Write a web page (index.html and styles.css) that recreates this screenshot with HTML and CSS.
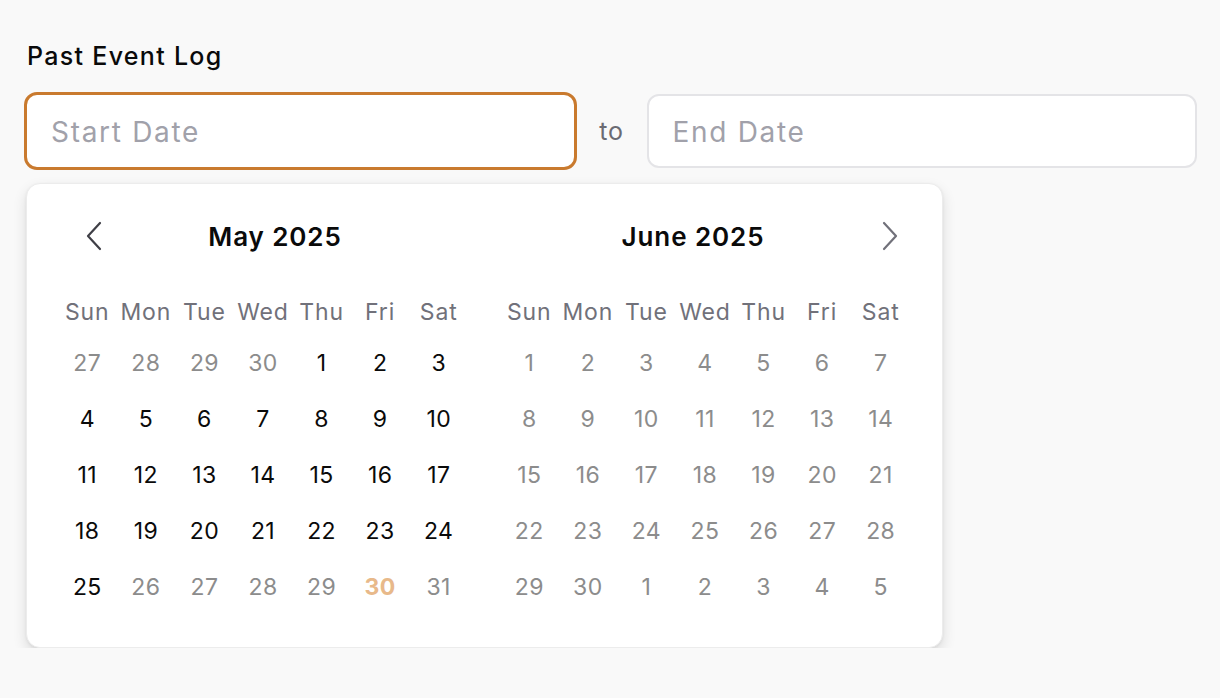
FILE: index.html
```html
<!DOCTYPE html>
<html lang="en">
<head>
<meta charset="utf-8">
<title>Past Event Log</title>
<link rel="stylesheet" href="styles.css">
</head>
<body>
<div class="page">
  <div class="label">Past Event Log</div>
  <div class="range">
    <div class="field field-active"><span class="ph">Start Date</span></div>
    <span class="to">to</span>
    <div class="field"><span class="ph">End Date</span></div>
  </div>
  <div class="popover">
    <div class="month">
      <div class="mhead">
        <button class="nav nav-prev" aria-label="Previous month">
          <svg width="18" height="30" viewBox="0 0 18 30"><path d="M15 2 L3 15 L15 28" fill="none" stroke="#3f3f46" stroke-width="2.2" stroke-linecap="round" stroke-linejoin="round"/></svg>
        </button>
        <div class="mtitle">May 2025</div>
      </div>
      <div class="grid">
        <span class="wd">Sun</span><span class="wd">Mon</span><span class="wd">Tue</span><span class="wd">Wed</span><span class="wd">Thu</span><span class="wd">Fri</span><span class="wd">Sat</span>
        <span class="d out">27</span><span class="d out">28</span><span class="d out">29</span><span class="d out">30</span><span class="d">1</span><span class="d">2</span><span class="d">3</span>
        <span class="d">4</span><span class="d">5</span><span class="d">6</span><span class="d">7</span><span class="d">8</span><span class="d">9</span><span class="d">10</span>
        <span class="d">11</span><span class="d">12</span><span class="d">13</span><span class="d">14</span><span class="d">15</span><span class="d">16</span><span class="d">17</span>
        <span class="d">18</span><span class="d">19</span><span class="d">20</span><span class="d">21</span><span class="d">22</span><span class="d">23</span><span class="d">24</span>
        <span class="d">25</span><span class="d out">26</span><span class="d out">27</span><span class="d out">28</span><span class="d out">29</span><span class="d today">30</span><span class="d out">31</span>
      </div>
    </div>
    <div class="month">
      <div class="mhead">
        <div class="mtitle">June 2025</div>
        <button class="nav nav-next" aria-label="Next month">
          <svg width="18" height="30" viewBox="0 0 18 30"><path d="M3 2 L15 15 L3 28" fill="none" stroke="#71717a" stroke-width="2.2" stroke-linecap="round" stroke-linejoin="round"/></svg>
        </button>
      </div>
      <div class="grid">
        <span class="wd">Sun</span><span class="wd">Mon</span><span class="wd">Tue</span><span class="wd">Wed</span><span class="wd">Thu</span><span class="wd">Fri</span><span class="wd">Sat</span>
        <span class="d out">1</span><span class="d out">2</span><span class="d out">3</span><span class="d out">4</span><span class="d out">5</span><span class="d out">6</span><span class="d out">7</span>
        <span class="d out">8</span><span class="d out">9</span><span class="d out">10</span><span class="d out">11</span><span class="d out">12</span><span class="d out">13</span><span class="d out">14</span>
        <span class="d out">15</span><span class="d out">16</span><span class="d out">17</span><span class="d out">18</span><span class="d out">19</span><span class="d out">20</span><span class="d out">21</span>
        <span class="d out">22</span><span class="d out">23</span><span class="d out">24</span><span class="d out">25</span><span class="d out">26</span><span class="d out">27</span><span class="d out">28</span>
        <span class="d out">29</span><span class="d out">30</span><span class="d out">1</span><span class="d out">2</span><span class="d out">3</span><span class="d out">4</span><span class="d out">5</span>
      </div>
    </div>
  </div>
</div>
</body>
</html>
```

FILE: styles.css
```css
html, body {
  margin: 0;
  padding: 0;
  background: #f9f9f9;
  font-family: Inter, "Noto Sans", "Liberation Sans", sans-serif;
  color: #0a0a0a;
}
.page {
  padding: 38px 23px 0 24px;
  width: 1173px;
}
.label {
  font-size: 25px;
  font-weight: 500;
  line-height: 36px;
  letter-spacing: 1.3px;
  margin-left: 3px;
  margin-bottom: 18px;
  color: #0a0a0a;
}
.range {
  display: flex;
  align-items: center;
}
.field {
  flex: 1;
  height: 74px;
  box-sizing: border-box;
  background: #fff;
  border: 2px solid #e4e4e7;
  border-radius: 12px;
  display: flex;
  align-items: center;
  padding-left: 24px;
}
.field-active {
  height: 78px;
  border: 3px solid #c97a2e;
  border-radius: 13px;
}
.ph {
  font-size: 28px;
  color: #a1a1aa;
  letter-spacing: 1.7px;
  margin-top: 1px;
}
.to {
  font-size: 25px;
  letter-spacing: 0.8px;
  color: #6b6b73;
  width: 70px;
  text-align: center;
  flex: none;
}
.popover {
  margin-top: 13px;
  margin-left: 2px;
  width: 917px;
  height: 465px;
  box-sizing: border-box;
  background: #fff;
  border: 1px solid #ececec;
  border-radius: 14px;
  box-shadow: 0 6px 14px rgba(0,0,0,0.12), 0 1px 3px rgba(0,0,0,0.06);
  display: flex;
  gap: 32px;
  padding: 31px 32px 0 31px;
}
.month {
  width: 410px;
}
.mhead {
  height: 42px;
  display: flex;
  align-items: center;
  margin-bottom: 32px;
}
.mtitle {
  flex: 1;
  text-align: center;
  font-size: 26px;
  font-weight: 600;
  letter-spacing: 0.9px;
  color: #0a0a0a;
}
.nav {
  background: none;
  border: 0;
  padding: 0;
  width: 24px;
  height: 42px;
  display: flex;
  align-items: center;
  flex: none;
}
.nav svg {
  flex: none;
}
.nav-prev svg {
  margin-left: 27px;
}
.nav-next svg {
  margin-left: -5px;
}
.grid {
  display: grid;
  grid-template-columns: repeat(7, 1fr);
  grid-template-rows: 46px repeat(5, 56px);
}
.wd {
  display: flex;
  align-items: center;
  justify-content: center;
  font-size: 23px;
  letter-spacing: 0.9px;
  color: #71717a;
}
.d {
  display: flex;
  align-items: center;
  justify-content: center;
  font-size: 23px;
  letter-spacing: 0.4px;
  color: #0a0a0a;
}
.d.out {
  color: #8c8c8c;
}
.d.today {
  color: #e8b98a;
  font-weight: 700;
}
```
